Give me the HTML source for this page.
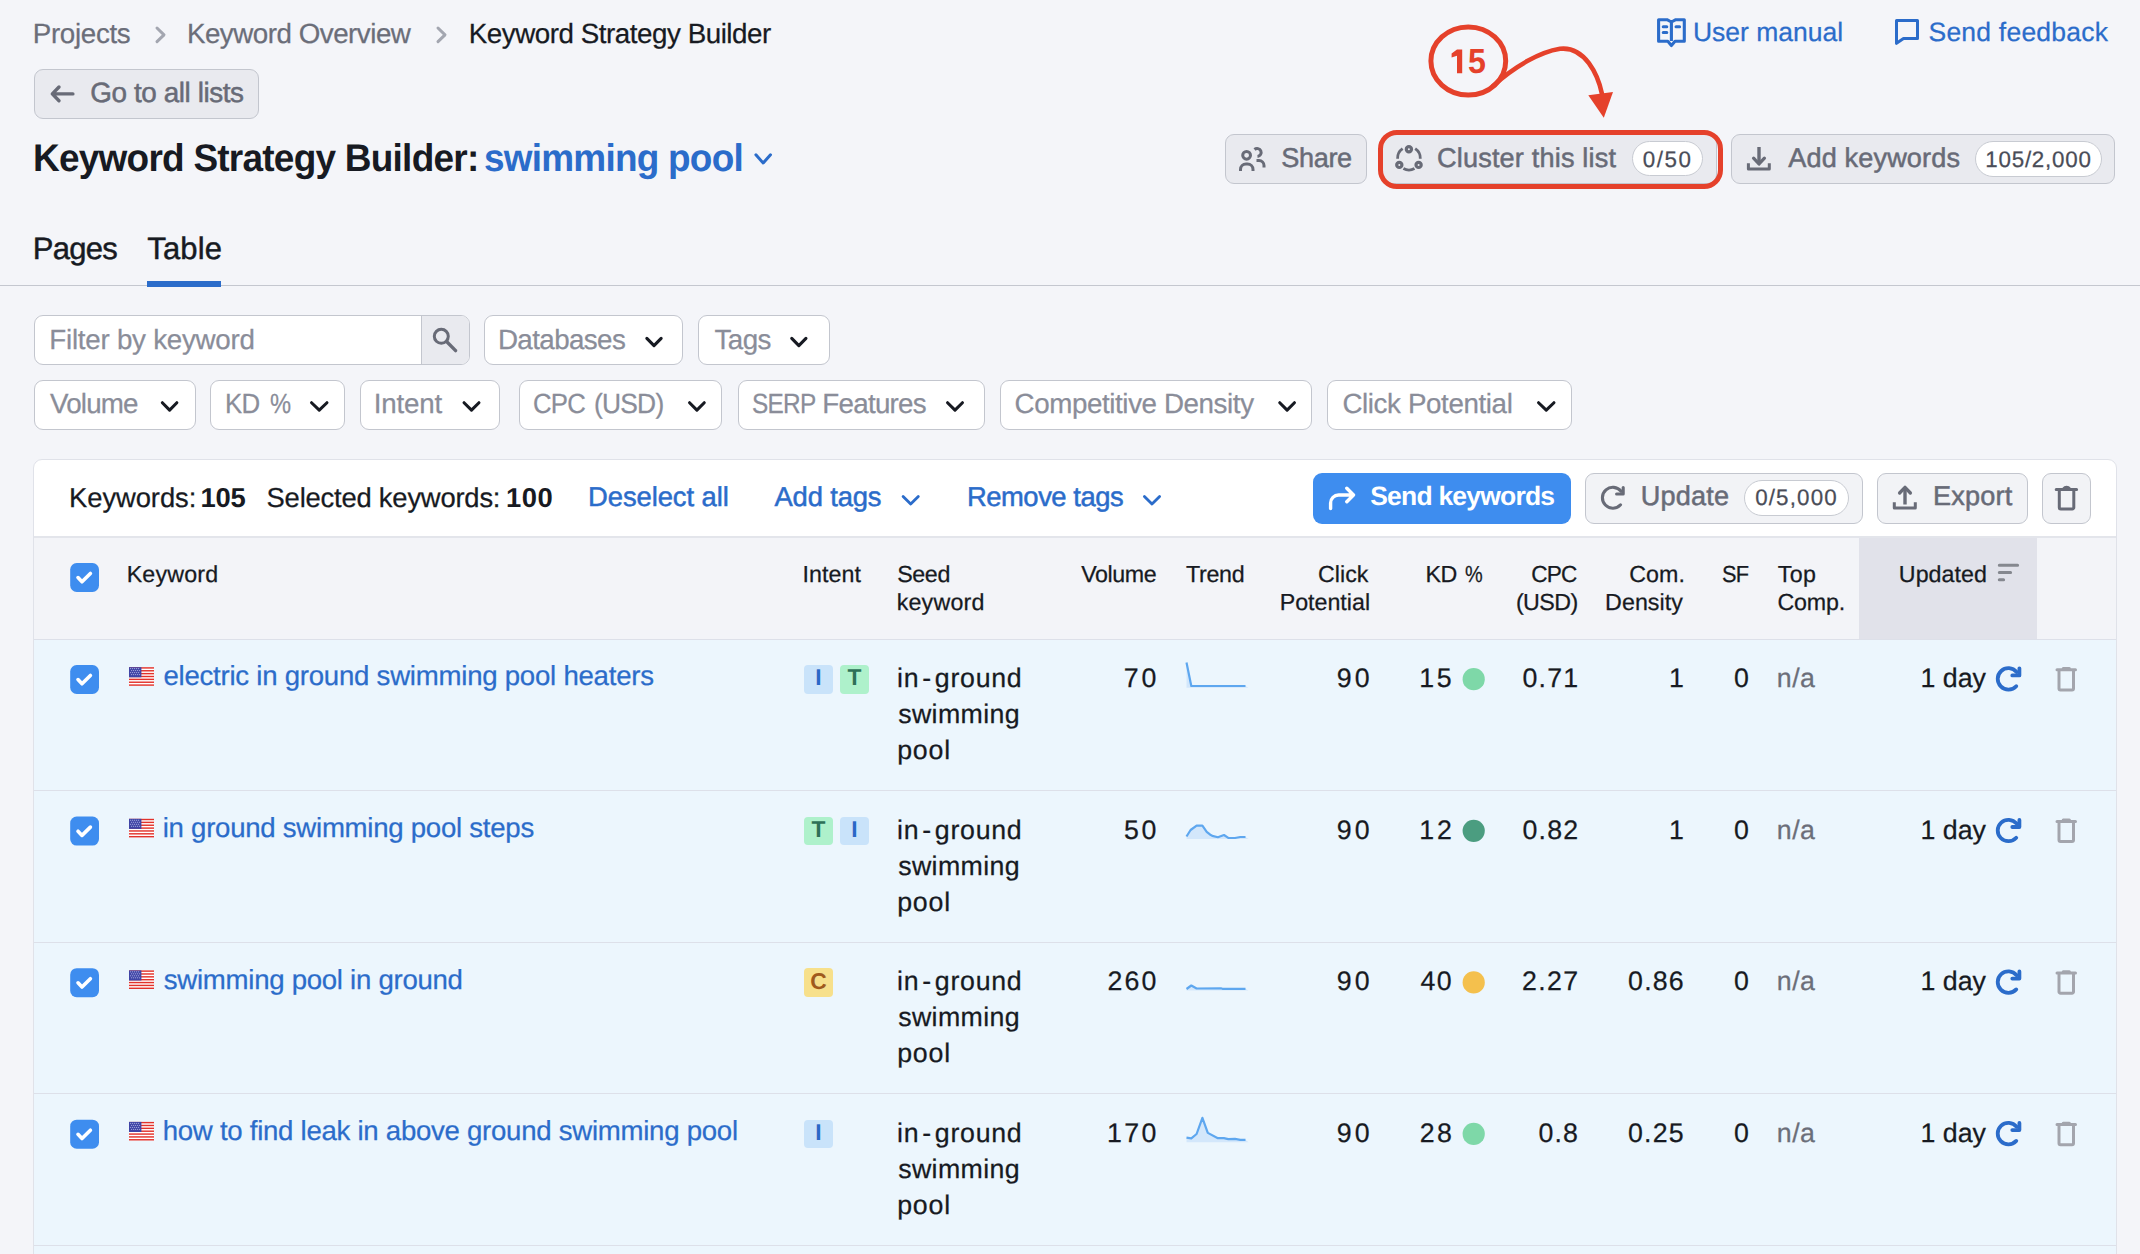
<!DOCTYPE html>
<html><head><meta charset="utf-8"><style>
html,body{margin:0;padding:0;}
body{width:2140px;height:1254px;overflow:hidden;background:#f4f5f9;position:relative;font-family:"Liberation Sans",sans-serif;}
.t{position:absolute;white-space:nowrap;line-height:1;text-rendering:geometricPrecision;}
.b{position:absolute;box-sizing:border-box;}
svg.b{overflow:visible;}
</style></head><body>
<span id="bc1" class="t" style="top:20.00px;font-size:27.75px;color:#6b6e79;font-weight:400;letter-spacing:-0.324px;-webkit-text-stroke:0.25px #6b6e79;left:32.72px;">Projects</span>
<svg class="b" style="left:150px;top:22px" width="24" height="26" viewBox="150 22 24 26"><path d="M157 28 L164 34.8 L157 41.6" fill="none" stroke="#a3a6b0" stroke-width="3" stroke-linecap="round" stroke-linejoin="round"/></svg>
<span id="bc2" class="t" style="top:20.00px;font-size:27.75px;color:#6b6e79;font-weight:400;letter-spacing:-0.488px;-webkit-text-stroke:0.25px #6b6e79;left:186.92px;">Keyword Overview</span>
<svg class="b" style="left:431px;top:22px" width="24" height="26" viewBox="431 22 24 26"><path d="M438 28 L445 34.8 L438 41.6" fill="none" stroke="#a3a6b0" stroke-width="3" stroke-linecap="round" stroke-linejoin="round"/></svg>
<span id="bc3" class="t" style="top:20.00px;font-size:27.75px;color:#171a22;font-weight:400;letter-spacing:-0.460px;-webkit-text-stroke:0.25px #171a22;left:468.72px;">Keyword Strategy Builder</span>
<div class="b" style="left:34px;top:69px;width:225px;height:50px;background:#e9eaef;border:1px solid #c3c6ce;border-radius:9px;"></div>
<svg class="b" style="left:44px;top:80px" width="36" height="28" viewBox="44 80 36 28"><path d="M72.9 93.9 H53 M59 87 L52.3 93.9 L59 100.8" fill="none" stroke="#686b77" stroke-width="3.4" stroke-linecap="round" stroke-linejoin="round"/></svg>
<span id="go" class="t" style="top:79.00px;font-size:27.88px;color:#686b77;font-weight:400;letter-spacing:-0.411px;-webkit-text-stroke:0.5px #686b77;left:90.20px;">Go to all lists</span>
<span id="title1" class="t" style="top:140.00px;font-size:38.50px;color:#171a22;font-weight:700;letter-spacing:-0.800px;transform:scaleX(0.9611);transform-origin:left center;left:32.82px;">Keyword Strategy Builder:</span>
<span id="title2" class="t" style="top:140.00px;font-size:38.50px;color:#2b6cca;font-weight:700;letter-spacing:-0.800px;transform:scaleX(0.9598);transform-origin:left center;left:483.90px;">swimming pool</span>
<svg class="b" style="left:751px;top:150px" width="25" height="19" viewBox="751 150 25 19"><path d="M755.90 154.80 L763.20 163.00 L770.50 154.80" fill="none" stroke="#2b6cca" stroke-width="3" stroke-linecap="round" stroke-linejoin="round"/></svg>
<span id="tab1" class="t" style="top:233.00px;font-size:31.00px;color:#171a22;font-weight:400;letter-spacing:-0.736px;-webkit-text-stroke:0.45px #171a22;left:32.76px;">Pages</span>
<span id="tab2" class="t" style="top:233.00px;font-size:31.00px;color:#171a22;font-weight:400;letter-spacing:0.141px;-webkit-text-stroke:0.45px #171a22;left:147.30px;">Table</span>
<div class="b" style="left:0px;top:285px;width:2140px;height:1px;background:#c4c7cf;"></div>
<div class="b" style="left:147px;top:281px;width:74px;height:6px;background:#2b6cca;"></div>
<svg class="b" style="left:1650px;top:12px" width="44" height="40" viewBox="1650 12 44 40"><path d="M1658.6 19.7 H1667 L1671.4 22 L1675.8 19.7 H1684.3 V41.3 H1675 L1671.4 45.5 L1667.8 41.3 H1658.6 Z M1671.4 22 V41" fill="none" stroke="#2b6cca" stroke-width="3.1" stroke-linejoin="round"/><path d="M1663.2 26.8 H1666.8 M1663.2 32.4 H1666.8 M1676 26.8 H1679.6" stroke="#2b6cca" stroke-width="3" stroke-linecap="round"/></svg>
<span id="um" class="t" style="top:19.00px;font-size:26.50px;color:#2b6cca;font-weight:400;letter-spacing:-0.002px;-webkit-text-stroke:0.25px #2b6cca;left:1692.96px;">User manual</span>
<svg class="b" style="left:1888px;top:12px" width="40" height="40" viewBox="1888 12 40 40"><path d="M1896.5 20.5 H1917.5 V38.6 H1903.5 L1896.5 43.3 Z" fill="none" stroke="#2b6cca" stroke-width="3" stroke-linejoin="round"/></svg>
<span id="sf" class="t" style="top:19.00px;font-size:26.50px;color:#2b6cca;font-weight:400;letter-spacing:0.221px;-webkit-text-stroke:0.25px #2b6cca;left:1928.50px;">Send feedback</span>
<div class="b" style="left:1225px;top:134px;width:142px;height:50px;background:#e9eaef;border:1px solid #c3c6ce;border-radius:9px;"></div>
<svg class="b" style="left:1230px;top:140px" width="50" height="40" viewBox="1230 140 50 40"><circle cx="1246.6" cy="155.3" r="3.9" fill="none" stroke="#686b77" stroke-width="3"/><path d="M1240.5 171 V169.5 A5.5 5.5 0 0 1 1246 164 H1247.5 A5.5 5.5 0 0 1 1253 169.5 V171" fill="none" stroke="#686b77" stroke-width="3" stroke-linecap="butt"/><path d="M1254.5 149.5 A4 4 0 1 1 1257.5 156.5" fill="none" stroke="#686b77" stroke-width="3"/><path d="M1256.5 160.5 H1259 A5 5 0 0 1 1264 165.5 V167.5" fill="none" stroke="#686b77" stroke-width="3"/></svg>
<span id="share" class="t" style="top:144.00px;font-size:27.12px;color:#686b77;font-weight:400;letter-spacing:-0.327px;-webkit-text-stroke:0.5px #686b77;left:1281.17px;">Share</span>
<div class="b" style="left:1382px;top:134px;width:335px;height:50px;background:#e9eaef;border:1px solid #c3c6ce;border-radius:9px;"></div>
<svg class="b" style="left:1388px;top:138px" width="42" height="40" viewBox="1388 138 42 40"><circle cx="1408.9" cy="149.2" r="2.6" fill="none" stroke="#686b77" stroke-width="3.2"/><circle cx="1399.3" cy="164.9" r="2.6" fill="none" stroke="#686b77" stroke-width="3.2"/><circle cx="1418.6" cy="164.9" r="2.6" fill="none" stroke="#686b77" stroke-width="3.2"/><path d="M1397.6 158.8 A11.5 11.5 0 0 1 1402.6 148.7 M1415.2 148.7 A11.5 11.5 0 0 1 1420.3 158.8 M1414.5 168.6 A11.5 11.5 0 0 1 1403.4 168.6" fill="none" stroke="#686b77" stroke-width="2.8"/></svg>
<span id="cluster" class="t" style="top:144.00px;font-size:27.12px;color:#686b77;font-weight:400;letter-spacing:0.169px;-webkit-text-stroke:0.5px #686b77;left:1437.02px;">Cluster this list</span>
<div class="b" style="left:1631.6px;top:141.4px;width:71.0px;height:35.0px;background:#fff;border:1px solid #c8cbd2;border-radius:18px;"></div>
<span id="b050" class="t" style="top:149.00px;font-size:22.38px;color:#4a4d58;font-weight:400;letter-spacing:1.562px;-webkit-text-stroke:0.25px #4a4d58;left:1642.63px;">0/50</span>
<div class="b" style="left:1731.4px;top:134px;width:384.0999999999999px;height:50px;background:#e9eaef;border:1px solid #c3c6ce;border-radius:9px;"></div>
<svg class="b" style="left:1740px;top:140px" width="40" height="40" viewBox="1740 140 40 40"><path d="M1759 147 V163" fill="none" stroke="#686b77" stroke-width="3.4"/><path d="M1753.6 158.2 L1759 164 L1764.4 158.2" fill="none" stroke="#686b77" stroke-width="3.3" stroke-linecap="round" stroke-linejoin="round"/><path d="M1748.4 163.3 V169 H1769.3 V163.3" fill="none" stroke="#686b77" stroke-width="3" stroke-linejoin="round"/></svg>
<span id="addkw" class="t" style="top:144.00px;font-size:27.12px;color:#686b77;font-weight:400;letter-spacing:0.132px;-webkit-text-stroke:0.5px #686b77;left:1788.25px;">Add keywords</span>
<div class="b" style="left:1974.6px;top:141.2px;width:127.70000000000027px;height:35.70000000000002px;background:#fff;border:1px solid #c8cbd2;border-radius:18px;"></div>
<span id="b105" class="t" style="top:149.00px;font-size:22.38px;color:#4a4d58;font-weight:400;letter-spacing:0.754px;-webkit-text-stroke:0.25px #4a4d58;left:1985.30px;">105/2,000</span>
<svg class="b" style="left:1410px;top:10px" width="230" height="120" viewBox="1410 10 230 120"><ellipse cx="1468.3" cy="61" rx="37.4" ry="34.1" fill="none" stroke="#e5412b" stroke-width="5"/><path d="M1493 86 C1515 66, 1540 52, 1560 48.8 C1585 46, 1598 75, 1602 94" fill="none" stroke="#e5412b" stroke-width="4.6" stroke-linecap="round"/><path d="M1588.3 95.2 L1613 91.9 L1603.8 117.7 Z" fill="#e5412b"/></svg>
<svg class="b" style="left:1448px;top:46px" width="18" height="30" viewBox="1448 46 18 30"><path d="M1451.6 53.6 L1457 49.5 H1462.2 V73.2 H1457 V55.8 L1451.6 57.6 Z" fill="#e5412b"/></svg>
<span id="n15" class="t" style="top:45.00px;font-size:34.75px;color:#e5412b;font-weight:700;transform:scaleX(0.9253);transform-origin:left center;left:1467.91px;">5</span>
<div class="b" style="left:1377.7px;top:130.2px;width:345px;height:59.1px;box-sizing:border-box;border:5px solid #e5412b;border-radius:19px;"></div>
<div class="b" style="left:34px;top:315px;width:435.5px;height:50px;background:#fff;border:1px solid #c3c6ce;border-radius:9px;box-sizing:border-box;"></div>
<div class="b" style="left:421px;top:316px;width:47.5px;height:48px;background:#e9eaef;border-left:1px solid #c3c6ce;border-radius:0 8px 8px 0;box-sizing:border-box;"></div>
<svg class="b" style="left:426px;top:320px" width="40" height="40" viewBox="426 320 40 40"><circle cx="441.3" cy="336.3" r="7" fill="none" stroke="#686b77" stroke-width="3"/><path d="M446.8 341.8 L455.6 350.6" stroke="#686b77" stroke-width="3.4" stroke-linecap="round"/></svg>
<span id="filt" class="t" style="top:326.00px;font-size:27.75px;color:#8a8d99;font-weight:400;letter-spacing:-0.254px;-webkit-text-stroke:0.25px #8a8d99;left:49.32px;">Filter by keyword</span>
<div class="b" style="left:484.4px;top:315px;width:199.10000000000002px;height:50px;background:#fff;border:1px solid #c3c6ce;border-radius:9px;box-sizing:border-box;"></div>
<span id="db" class="t" style="top:326.00px;font-size:27.75px;color:#8a8d99;font-weight:400;letter-spacing:-0.599px;-webkit-text-stroke:0.25px #8a8d99;left:497.92px;">Databases</span>
<svg class="b" style="left:642px;top:333px" width="25" height="18" viewBox="642 333 25 18"><path d="M646.85 338.35 L654.00 345.65 L661.15 338.35" fill="none" stroke="#171a22" stroke-width="3.1" stroke-linecap="round" stroke-linejoin="round"/></svg>
<div class="b" style="left:698.3px;top:315px;width:131.30000000000007px;height:50px;background:#fff;border:1px solid #c3c6ce;border-radius:9px;box-sizing:border-box;"></div>
<span id="tags" class="t" style="top:326.00px;font-size:27.75px;color:#8a8d99;font-weight:400;letter-spacing:-0.600px;-webkit-text-stroke:0.25px #8a8d99;left:714.58px;">Tags</span>
<svg class="b" style="left:787px;top:333px" width="25" height="18" viewBox="787 333 25 18"><path d="M791.75 338.35 L798.85 345.65 L805.95 338.35" fill="none" stroke="#171a22" stroke-width="3.1" stroke-linecap="round" stroke-linejoin="round"/></svg>
<div class="b" style="left:34.4px;top:380px;width:161.2px;height:50px;background:#fff;border:1px solid #c3c6ce;border-radius:9px;box-sizing:border-box;"></div>
<span id="vol" class="t" style="top:390.00px;font-size:27.75px;color:#8a8d99;font-weight:400;letter-spacing:-0.800px;-webkit-text-stroke:0.25px #8a8d99;left:49.98px;">Volume</span>
<svg class="b" style="left:157px;top:398px" width="25" height="18" viewBox="157 398 25 18"><path d="M162.35 402.75 L169.60 410.05 L176.85 402.75" fill="none" stroke="#171a22" stroke-width="3.1" stroke-linecap="round" stroke-linejoin="round"/></svg>
<div class="b" style="left:210.2px;top:380px;width:134.40000000000003px;height:50px;background:#fff;border:1px solid #c3c6ce;border-radius:9px;box-sizing:border-box;"></div>
<span id="kd0" class="t" style="top:390.00px;font-size:27.75px;color:#8a8d99;font-weight:400;letter-spacing:-0.800px;transform:scaleX(0.9310);transform-origin:left center;-webkit-text-stroke:0.25px #8a8d99;left:224.68px;">KD</span>
<span id="kd1" class="t" style="top:390.00px;font-size:27.75px;color:#8a8d99;font-weight:400;transform:scaleX(0.8543);transform-origin:left center;-webkit-text-stroke:0.25px #8a8d99;left:269.56px;">%</span>
<svg class="b" style="left:307px;top:398px" width="26" height="18" viewBox="307 398 26 18"><path d="M311.55 402.75 L319.25 410.05 L326.95 402.75" fill="none" stroke="#171a22" stroke-width="3.1" stroke-linecap="round" stroke-linejoin="round"/></svg>
<div class="b" style="left:360.3px;top:380px;width:139.89999999999998px;height:50px;background:#fff;border:1px solid #c3c6ce;border-radius:9px;box-sizing:border-box;"></div>
<span id="intent" class="t" style="top:390.00px;font-size:27.75px;color:#8a8d99;font-weight:400;letter-spacing:-0.175px;-webkit-text-stroke:0.25px #8a8d99;left:373.64px;">Intent</span>
<svg class="b" style="left:459px;top:398px" width="26" height="18" viewBox="459 398 26 18"><path d="M464.05 402.75 L471.50 410.05 L478.95 402.75" fill="none" stroke="#171a22" stroke-width="3.1" stroke-linecap="round" stroke-linejoin="round"/></svg>
<div class="b" style="left:518.5px;top:380px;width:203.60000000000002px;height:50px;background:#fff;border:1px solid #c3c6ce;border-radius:9px;box-sizing:border-box;"></div>
<span id="cpc0" class="t" style="top:390.00px;font-size:27.75px;color:#8a8d99;font-weight:400;letter-spacing:-0.800px;transform:scaleX(0.9280);transform-origin:left center;-webkit-text-stroke:0.25px #8a8d99;left:533.09px;">CPC</span>
<span id="cpc1" class="t" style="top:390.00px;font-size:27.75px;color:#8a8d99;font-weight:400;letter-spacing:-0.800px;transform:scaleX(0.9498);transform-origin:left center;-webkit-text-stroke:0.25px #8a8d99;left:594.17px;">(USD)</span>
<svg class="b" style="left:685px;top:398px" width="25" height="18" viewBox="685 398 25 18"><path d="M689.55 402.75 L696.90 410.05 L704.25 402.75" fill="none" stroke="#171a22" stroke-width="3.1" stroke-linecap="round" stroke-linejoin="round"/></svg>
<div class="b" style="left:738.2px;top:380px;width:246.89999999999998px;height:50px;background:#fff;border:1px solid #c3c6ce;border-radius:9px;box-sizing:border-box;"></div>
<span id="serp0" class="t" style="top:390.00px;font-size:27.75px;color:#8a8d99;font-weight:400;letter-spacing:-0.800px;transform:scaleX(0.8786);transform-origin:left center;-webkit-text-stroke:0.25px #8a8d99;left:752.49px;">SERP</span>
<span id="serp1" class="t" style="top:390.00px;font-size:27.75px;color:#8a8d99;font-weight:400;letter-spacing:-0.734px;-webkit-text-stroke:0.25px #8a8d99;left:822.32px;">Features</span>
<svg class="b" style="left:943px;top:398px" width="26" height="18" viewBox="943 398 26 18"><path d="M947.55 402.75 L955.00 410.05 L962.45 402.75" fill="none" stroke="#171a22" stroke-width="3.1" stroke-linecap="round" stroke-linejoin="round"/></svg>
<div class="b" style="left:1000.4px;top:380px;width:312.0000000000001px;height:50px;background:#fff;border:1px solid #c3c6ce;border-radius:9px;box-sizing:border-box;"></div>
<span id="cd" class="t" style="top:390.00px;font-size:27.75px;color:#8a8d99;font-weight:400;letter-spacing:-0.406px;-webkit-text-stroke:0.25px #8a8d99;left:1014.59px;">Competitive Density</span>
<svg class="b" style="left:1275px;top:398px" width="25" height="18" viewBox="1275 398 25 18"><path d="M1279.75 402.75 L1287.10 410.05 L1294.45 402.75" fill="none" stroke="#171a22" stroke-width="3.1" stroke-linecap="round" stroke-linejoin="round"/></svg>
<div class="b" style="left:1327.3px;top:380px;width:244.4000000000001px;height:50px;background:#fff;border:1px solid #c3c6ce;border-radius:9px;box-sizing:border-box;"></div>
<span id="cp" class="t" style="top:390.00px;font-size:27.75px;color:#8a8d99;font-weight:400;letter-spacing:-0.383px;-webkit-text-stroke:0.25px #8a8d99;left:1342.39px;">Click Potential</span>
<svg class="b" style="left:1534px;top:398px" width="26" height="18" viewBox="1534 398 26 18"><path d="M1538.55 402.75 L1546.25 410.05 L1553.95 402.75" fill="none" stroke="#171a22" stroke-width="3.1" stroke-linecap="round" stroke-linejoin="round"/></svg>
<div class="b" style="left:33px;top:458.5px;width:2084px;height:900px;background:#fff;border:1px solid #e0e2e9;border-radius:9px;box-sizing:border-box;"></div>
<span id="kw" class="t" style="top:484.00px;font-size:27.38px;color:#171a22;font-weight:400;letter-spacing:-0.071px;-webkit-text-stroke:0.25px #171a22;left:69.05px;">Keywords:</span>
<span id="kw105" class="t" style="top:484.00px;font-size:27.38px;color:#171a22;font-weight:700;letter-spacing:-0.200px;left:200.48px;">105</span>
<span id="sel" class="t" style="top:484.00px;font-size:27.38px;color:#171a22;font-weight:400;letter-spacing:-0.202px;-webkit-text-stroke:0.25px #171a22;left:266.56px;">Selected keywords:</span>
<span id="sel100" class="t" style="top:484.00px;font-size:27.38px;color:#171a22;font-weight:700;letter-spacing:0.480px;left:506.08px;">100</span>
<span id="desel" class="t" style="top:483.00px;font-size:27.38px;color:#2b6cca;font-weight:400;letter-spacing:-0.066px;-webkit-text-stroke:0.5px #2b6cca;left:588.05px;">Deselect all</span>
<span id="addt" class="t" style="top:483.00px;font-size:27.38px;color:#2b6cca;font-weight:400;letter-spacing:-0.146px;-webkit-text-stroke:0.5px #2b6cca;left:774.45px;">Add tags</span>
<svg class="b" style="left:898px;top:492px" width="26" height="18" viewBox="898 492 26 18"><path d="M903.10 496.40 L910.70 504.10 L918.30 496.40" fill="none" stroke="#2b6cca" stroke-width="2.8" stroke-linecap="round" stroke-linejoin="round"/></svg>
<span id="remt" class="t" style="top:483.00px;font-size:27.38px;color:#2b6cca;font-weight:400;letter-spacing:-0.456px;-webkit-text-stroke:0.5px #2b6cca;left:966.95px;">Remove tags</span>
<svg class="b" style="left:1140px;top:492px" width="26" height="18" viewBox="1140 492 26 18"><path d="M1144.40 496.40 L1152.00 504.10 L1159.60 496.40" fill="none" stroke="#2b6cca" stroke-width="2.8" stroke-linecap="round" stroke-linejoin="round"/></svg>
<div class="b" style="left:1313px;top:473px;width:258px;height:50.700000000000045px;background:#3e8def;border-radius:9px;"></div>
<svg class="b" style="left:1322px;top:478px" width="40" height="40" viewBox="1322 478 40 40"><path d="M1330.6 508.6 V503 A8 8 0 0 1 1338.6 495 H1352.5 M1346.8 488.2 L1353.5 495 L1346.8 501.8" fill="none" stroke="#fff" stroke-width="3.4" stroke-linecap="round" stroke-linejoin="round"/></svg>
<span id="send" class="t" style="top:483.00px;font-size:26.50px;color:#fff;font-weight:700;letter-spacing:-0.796px;left:1370.24px;">Send keywords</span>
<div class="b" style="left:1585.4px;top:473px;width:277.5999999999999px;height:50.700000000000045px;background:#f2f3f6;border:1px solid #c3c6ce;border-radius:9px;box-sizing:border-box;"></div>
<svg class="b" style="left:1594px;top:478px" width="40" height="40" viewBox="1594 478 40 40"><path d="M1621.1 491.3 A10.45 10.45 0 1 0 1620.57 504.8" fill="none" stroke="#686b77" stroke-width="3.1" stroke-linecap="round"/><path d="M1623.2 487.6 V494 H1616.6" fill="none" stroke="#686b77" stroke-width="3.1" stroke-linecap="round" stroke-linejoin="round"/></svg>
<span id="upd" class="t" style="top:482.00px;font-size:27.12px;color:#686b77;font-weight:400;letter-spacing:0.215px;-webkit-text-stroke:0.5px #686b77;left:1640.71px;">Update</span>
<div class="b" style="left:1743.6px;top:480.3px;width:105.20000000000005px;height:35.30000000000001px;background:#fff;border:1px solid #c8cbd2;border-radius:18px;box-sizing:border-box;"></div>
<span id="b5000" class="t" style="top:487.00px;font-size:22.38px;color:#4a4d58;font-weight:400;letter-spacing:1.149px;-webkit-text-stroke:0.25px #4a4d58;left:1755.13px;">0/5,000</span>
<div class="b" style="left:1877px;top:473px;width:150.70000000000005px;height:50.700000000000045px;background:#f2f3f6;border:1px solid #c3c6ce;border-radius:9px;box-sizing:border-box;"></div>
<svg class="b" style="left:1886px;top:478px" width="40" height="40" viewBox="1886 478 40 40"><path d="M1905 504.5 V488" fill="none" stroke="#686b77" stroke-width="3.4"/><path d="M1899.6 493 L1905 487.3 L1910.4 493" fill="none" stroke="#686b77" stroke-width="3.3" stroke-linecap="round" stroke-linejoin="round"/><path d="M1894.3 502.3 V508 H1915.3 V502.3" fill="none" stroke="#686b77" stroke-width="3" stroke-linejoin="round"/></svg>
<span id="exp" class="t" style="top:482.00px;font-size:27.12px;color:#686b77;font-weight:400;letter-spacing:0.213px;-webkit-text-stroke:0.5px #686b77;left:1932.98px;">Export</span>
<div class="b" style="left:2042.1px;top:473px;width:48.59999999999991px;height:50.700000000000045px;background:#f2f3f6;border:1px solid #c3c6ce;border-radius:9px;box-sizing:border-box;"></div>
<svg class="b" style="left:2046px;top:478px" width="40" height="40" viewBox="2046 478 40 40"><path d="M2056.2 489.6 H2076.6 M2063.8 488.5 A3.2 2.6 0 0 1 2069.4 488.5" fill="none" stroke="#686b77" stroke-width="3" stroke-linecap="round"/><path d="M2059.3 489.6 V507.5 A1.5 1.5 0 0 0 2060.8 509 H2072.3 A1.5 1.5 0 0 0 2073.8 507.5 V489.6" fill="none" stroke="#686b77" stroke-width="3"/></svg>
<div class="b" style="left:34px;top:536px;width:2082px;height:2px;background:#e3e5eb;"></div>
<div class="b" style="left:34px;top:538px;width:2082px;height:101px;background:#f3f4f8;"></div>
<div class="b" style="left:1859px;top:538px;width:178px;height:101px;background:#e1e2ea;"></div>
<svg class="b" style="left:68px;top:561px" width="34" height="34" viewBox="68 561 34 34"><rect x="70.2" y="563.00" width="28.8" height="29" rx="6.5" fill="#3e8def"/><path d="M78 577.60 L82 581.80 L90.4 573.50" fill="none" stroke="#fff" stroke-width="3.6" stroke-linecap="round" stroke-linejoin="round"/></svg>
<span id="h_kw" class="t" style="top:563.00px;font-size:23.25px;color:#171a22;font-weight:400;letter-spacing:0.156px;-webkit-text-stroke:0.25px #171a22;left:126.69px;">Keyword</span>
<span id="h_int" class="t" style="top:563.00px;font-size:23.25px;color:#171a22;font-weight:400;letter-spacing:0.049px;-webkit-text-stroke:0.25px #171a22;left:802.55px;">Intent</span>
<span id="h_seed1" class="t" style="top:563.00px;font-size:23.25px;color:#171a22;font-weight:400;letter-spacing:-0.353px;-webkit-text-stroke:0.25px #171a22;left:897.14px;">Seed</span>
<span id="h_seed2" class="t" style="top:591.00px;font-size:23.25px;color:#171a22;font-weight:400;letter-spacing:0.215px;-webkit-text-stroke:0.25px #171a22;left:896.63px;">keyword</span>
<span id="h_vol" class="t" style="top:563.00px;font-size:23.25px;color:#171a22;font-weight:400;letter-spacing:-0.405px;-webkit-text-stroke:0.25px #171a22;right:983.67px;">Volume</span>
<span id="h_trend" class="t" style="top:563.00px;font-size:23.25px;color:#171a22;font-weight:400;letter-spacing:-0.289px;-webkit-text-stroke:0.25px #171a22;left:1185.98px;">Trend</span>
<span id="h_cp1" class="t" style="top:563.00px;font-size:23.25px;color:#171a22;font-weight:400;letter-spacing:0.018px;-webkit-text-stroke:0.25px #171a22;right:771.52px;">Click</span>
<span id="h_cp2" class="t" style="top:591.00px;font-size:23.25px;color:#171a22;font-weight:400;letter-spacing:-0.015px;-webkit-text-stroke:0.25px #171a22;right:769.96px;">Potential</span>
<span id="h_kd" class="t" style="top:563.00px;font-size:23.25px;color:#171a22;font-weight:400;letter-spacing:-0.493px;-webkit-text-stroke:0.25px #171a22;left:1425.49px;">KD</span>
<span id="h_kd2" class="t" style="top:563.00px;font-size:23.25px;color:#171a22;font-weight:400;transform:scaleX(0.8565);transform-origin:left center;-webkit-text-stroke:0.25px #171a22;left:1465.29px;">%</span>
<span id="h_cpc1" class="t" style="top:563.00px;font-size:23.25px;color:#171a22;font-weight:400;letter-spacing:-0.800px;transform:scaleX(0.9752);transform-origin:right center;-webkit-text-stroke:0.25px #171a22;right:563.12px;">CPC</span>
<span id="h_cpc2" class="t" style="top:591.00px;font-size:23.25px;color:#171a22;font-weight:400;letter-spacing:-0.574px;-webkit-text-stroke:0.25px #171a22;right:562.33px;">(USD)</span>
<span id="h_cd1" class="t" style="top:563.00px;font-size:23.25px;color:#171a22;font-weight:400;letter-spacing:0.080px;-webkit-text-stroke:0.25px #171a22;right:455.00px;">Com.</span>
<span id="h_cd2" class="t" style="top:591.00px;font-size:23.25px;color:#171a22;font-weight:400;letter-spacing:0.037px;-webkit-text-stroke:0.25px #171a22;right:457.12px;">Density</span>
<span id="h_sf" class="t" style="top:563.00px;font-size:23.25px;color:#171a22;font-weight:400;letter-spacing:-0.800px;transform:scaleX(0.9357);transform-origin:left center;-webkit-text-stroke:0.25px #171a22;left:1721.61px;">SF</span>
<span id="h_top1" class="t" style="top:563.00px;font-size:23.25px;color:#171a22;font-weight:400;letter-spacing:0.399px;-webkit-text-stroke:0.25px #171a22;left:1777.78px;">Top</span>
<span id="h_top2" class="t" style="top:591.00px;font-size:23.25px;color:#171a22;font-weight:400;letter-spacing:-0.195px;-webkit-text-stroke:0.25px #171a22;left:1777.52px;">Comp.</span>
<span id="h_upd" class="t" style="top:563.00px;font-size:23.25px;color:#171a22;font-weight:400;letter-spacing:0.048px;-webkit-text-stroke:0.25px #171a22;left:1898.81px;">Updated</span>
<svg class="b" style="left:1994px;top:560px" width="30" height="26" viewBox="1994 560 30 26"><path d="M1999.3 565.3 H2017.6 M1999.3 572.5 H2010.6 M1999.3 579.7 H2003.6" stroke="#85888f" stroke-width="3" stroke-linecap="round"/></svg>
<div class="b" style="left:34px;top:640px;width:2082px;height:150px;background:#ecf6fd;"></div>
<div class="b" style="left:34px;top:639px;width:2082px;height:1px;background:#dde0e9;"></div>
<div class="b" style="left:34px;top:790px;width:2082px;height:1px;background:#dde0e9;"></div>
<svg class="b" style="left:68px;top:663px" width="34" height="34" viewBox="68 663 34 34"><rect x="70.2" y="665.00" width="28.8" height="29" rx="6.5" fill="#3e8def"/><path d="M78 679.60 L82 683.80 L90.4 675.50" fill="none" stroke="#fff" stroke-width="3.6" stroke-linecap="round" stroke-linejoin="round"/></svg>
<svg class="b" style="left:127px;top:665px" width="30" height="24" viewBox="127 665 30 24"><rect x="129" y="667.20" width="25" height="18.6" fill="#fff"/><rect x="129" y="667.20" width="25" height="1.43" fill="#e2322b"/><rect x="129" y="670.06" width="25" height="1.43" fill="#e2322b"/><rect x="129" y="672.92" width="25" height="1.43" fill="#e2322b"/><rect x="129" y="675.78" width="25" height="1.43" fill="#e2322b"/><rect x="129" y="678.65" width="25" height="1.43" fill="#e2322b"/><rect x="129" y="681.51" width="25" height="1.43" fill="#e2322b"/><rect x="129" y="684.37" width="25" height="1.43" fill="#e2322b"/><rect x="129" y="667.20" width="12.4" height="10.1" fill="#3f44a6"/><rect x="130.20" y="668.20" width="0.9" height="0.9" fill="#c9cbef"/><rect x="132.20" y="668.20" width="0.9" height="0.9" fill="#c9cbef"/><rect x="134.20" y="668.20" width="0.9" height="0.9" fill="#c9cbef"/><rect x="136.20" y="668.20" width="0.9" height="0.9" fill="#c9cbef"/><rect x="138.20" y="668.20" width="0.9" height="0.9" fill="#c9cbef"/><rect x="131.20" y="670.20" width="0.9" height="0.9" fill="#c9cbef"/><rect x="133.20" y="670.20" width="0.9" height="0.9" fill="#c9cbef"/><rect x="135.20" y="670.20" width="0.9" height="0.9" fill="#c9cbef"/><rect x="137.20" y="670.20" width="0.9" height="0.9" fill="#c9cbef"/><rect x="139.20" y="670.20" width="0.9" height="0.9" fill="#c9cbef"/><rect x="130.20" y="672.20" width="0.9" height="0.9" fill="#c9cbef"/><rect x="132.20" y="672.20" width="0.9" height="0.9" fill="#c9cbef"/><rect x="134.20" y="672.20" width="0.9" height="0.9" fill="#c9cbef"/><rect x="136.20" y="672.20" width="0.9" height="0.9" fill="#c9cbef"/><rect x="138.20" y="672.20" width="0.9" height="0.9" fill="#c9cbef"/><rect x="131.20" y="674.20" width="0.9" height="0.9" fill="#c9cbef"/><rect x="133.20" y="674.20" width="0.9" height="0.9" fill="#c9cbef"/><rect x="135.20" y="674.20" width="0.9" height="0.9" fill="#c9cbef"/><rect x="137.20" y="674.20" width="0.9" height="0.9" fill="#c9cbef"/><rect x="139.20" y="674.20" width="0.9" height="0.9" fill="#c9cbef"/></svg>
<span id="r0_kw" class="t" style="top:662.00px;font-size:27.62px;color:#2b6cca;font-weight:400;letter-spacing:-0.249px;-webkit-text-stroke:0.25px #2b6cca;left:163.43px;">electric in ground swimming pool heaters</span>
<div class="b" style="left:804px;top:665.20px;width:29px;height:28.6px;background:#c9e3fa;border-radius:4px;"></div>
<span class="t" style="left:804px;width:29px;text-align:center;top:666.48px;font-size:22.82px;font-weight:700;color:#2a67c6;">I</span>
<div class="b" style="left:840px;top:665.20px;width:29px;height:28.6px;background:#aef1cb;border-radius:4px;"></div>
<span class="t" style="left:840px;width:29px;text-align:center;top:666.48px;font-size:22.82px;font-weight:700;color:#2e7057;">T</span>
<span id="r0_s1" class="t" style="top:665.00px;font-size:26.75px;color:#171a22;font-weight:400;letter-spacing:0.711px;-webkit-text-stroke:0.25px #171a22;left:897.11px;">in&#8202;-&#8202;ground</span>
<span id="r0_s2" class="t" style="top:701.00px;font-size:26.75px;color:#171a22;font-weight:400;letter-spacing:0.366px;-webkit-text-stroke:0.25px #171a22;left:898.16px;">swimming</span>
<span id="r0_s3" class="t" style="top:737.00px;font-size:26.75px;color:#171a22;font-weight:400;letter-spacing:0.812px;-webkit-text-stroke:0.25px #171a22;left:897.18px;">pool</span>
<span id="r0_vol" class="t" style="top:665.00px;font-size:26.75px;color:#171a22;font-weight:400;letter-spacing:2.951px;-webkit-text-stroke:0.25px #171a22;right:980.70px;">70</span>
<svg class="b" style="left:1180px;top:654px" width="75" height="40" viewBox="1180 654 75 40"><path d="M1186.5 662.5 L1191.3 686.0 L1245.5 686.0 L1248.5 687.7 L1186.5 687.7 Z" fill="#d3e7fb"/><path d="M1186.5 662.5 L1191.3 686.0 L1245.5 686.0" fill="none" stroke="#5ea7ef" stroke-width="2.2" stroke-linejoin="round"/></svg>
<span id="r0_cp" class="t" style="top:665.00px;font-size:26.75px;color:#171a22;font-weight:400;letter-spacing:3.033px;-webkit-text-stroke:0.25px #171a22;right:767.42px;">90</span>
<span id="r0_kd" class="t" style="top:665.00px;font-size:26.75px;color:#171a22;font-weight:400;letter-spacing:2.795px;-webkit-text-stroke:0.25px #171a22;right:685.48px;">15</span>
<svg class="b" style="left:1460px;top:667px" width="28" height="26" viewBox="1460 667 28 26"><circle cx="1473.7" cy="679.20" r="11.1" fill="#7ed8a8"/></svg>
<span id="r0_cpc" class="t" style="top:665.00px;font-size:26.75px;color:#171a22;font-weight:400;letter-spacing:1.224px;-webkit-text-stroke:0.25px #171a22;right:560.67px;">0.71</span>
<span id="r0_cd" class="t" style="top:665.00px;font-size:26.75px;color:#171a22;font-weight:400;-webkit-text-stroke:0.25px #171a22;right:456.19px;">1</span>
<span id="r0_sf" class="t" style="top:665.00px;font-size:26.75px;color:#171a22;font-weight:400;-webkit-text-stroke:0.25px #171a22;right:391.16px;">0</span>
<span id="r0_na" class="t" style="top:665.00px;font-size:26.75px;color:#6b6e79;font-weight:400;letter-spacing:0.494px;-webkit-text-stroke:0.25px #6b6e79;left:1776.82px;">n/a</span>
<span id="r0_day" class="t" style="top:665.00px;font-size:26.75px;color:#171a22;font-weight:400;letter-spacing:-0.041px;-webkit-text-stroke:0.25px #171a22;right:154.19px;">1 day</span>
<svg class="b" style="left:1990px;top:659px" width="40" height="40" viewBox="1990 659 40 40"><path d="M2016.6 672.00 A10.7 10.7 0 1 0 2016.25 686.20" fill="none" stroke="#2b6cca" stroke-width="3.8" stroke-linecap="round"/><path d="M2019.4 668.30 V675.40 H2012.3" fill="none" stroke="#2b6cca" stroke-width="3.8" stroke-linecap="round" stroke-linejoin="round"/></svg>
<svg class="b" style="left:2050px;top:661px" width="32" height="36" viewBox="2050 661 32 36"><path d="M2057 669.80 H2075.5 M2063.2 668.50 H2069.4" fill="none" stroke="#a3a5ad" stroke-width="3" stroke-linecap="round"/><path d="M2059 669.80 V688.50 A1.5 1.5 0 0 0 2060.5 690.00 H2072 A1.5 1.5 0 0 0 2073.5 688.50 V669.80" fill="none" stroke="#a3a5ad" stroke-width="3"/></svg>
<div class="b" style="left:34px;top:791px;width:2082px;height:151px;background:#ecf6fd;"></div>
<div class="b" style="left:34px;top:942px;width:2082px;height:1px;background:#dde0e9;"></div>
<svg class="b" style="left:68px;top:814px" width="34" height="34" viewBox="68 814 34 34"><rect x="70.2" y="816.60" width="28.8" height="29" rx="6.5" fill="#3e8def"/><path d="M78 831.20 L82 835.40 L90.4 827.10" fill="none" stroke="#fff" stroke-width="3.6" stroke-linecap="round" stroke-linejoin="round"/></svg>
<svg class="b" style="left:127px;top:816px" width="30" height="24" viewBox="127 816 30 24"><rect x="129" y="818.80" width="25" height="18.6" fill="#fff"/><rect x="129" y="818.80" width="25" height="1.43" fill="#e2322b"/><rect x="129" y="821.66" width="25" height="1.43" fill="#e2322b"/><rect x="129" y="824.52" width="25" height="1.43" fill="#e2322b"/><rect x="129" y="827.38" width="25" height="1.43" fill="#e2322b"/><rect x="129" y="830.25" width="25" height="1.43" fill="#e2322b"/><rect x="129" y="833.11" width="25" height="1.43" fill="#e2322b"/><rect x="129" y="835.97" width="25" height="1.43" fill="#e2322b"/><rect x="129" y="818.80" width="12.4" height="10.1" fill="#3f44a6"/><rect x="130.20" y="819.80" width="0.9" height="0.9" fill="#c9cbef"/><rect x="132.20" y="819.80" width="0.9" height="0.9" fill="#c9cbef"/><rect x="134.20" y="819.80" width="0.9" height="0.9" fill="#c9cbef"/><rect x="136.20" y="819.80" width="0.9" height="0.9" fill="#c9cbef"/><rect x="138.20" y="819.80" width="0.9" height="0.9" fill="#c9cbef"/><rect x="131.20" y="821.80" width="0.9" height="0.9" fill="#c9cbef"/><rect x="133.20" y="821.80" width="0.9" height="0.9" fill="#c9cbef"/><rect x="135.20" y="821.80" width="0.9" height="0.9" fill="#c9cbef"/><rect x="137.20" y="821.80" width="0.9" height="0.9" fill="#c9cbef"/><rect x="139.20" y="821.80" width="0.9" height="0.9" fill="#c9cbef"/><rect x="130.20" y="823.80" width="0.9" height="0.9" fill="#c9cbef"/><rect x="132.20" y="823.80" width="0.9" height="0.9" fill="#c9cbef"/><rect x="134.20" y="823.80" width="0.9" height="0.9" fill="#c9cbef"/><rect x="136.20" y="823.80" width="0.9" height="0.9" fill="#c9cbef"/><rect x="138.20" y="823.80" width="0.9" height="0.9" fill="#c9cbef"/><rect x="131.20" y="825.80" width="0.9" height="0.9" fill="#c9cbef"/><rect x="133.20" y="825.80" width="0.9" height="0.9" fill="#c9cbef"/><rect x="135.20" y="825.80" width="0.9" height="0.9" fill="#c9cbef"/><rect x="137.20" y="825.80" width="0.9" height="0.9" fill="#c9cbef"/><rect x="139.20" y="825.80" width="0.9" height="0.9" fill="#c9cbef"/></svg>
<span id="r1_kw" class="t" style="top:814.00px;font-size:27.62px;color:#2b6cca;font-weight:400;letter-spacing:-0.272px;-webkit-text-stroke:0.25px #2b6cca;left:162.75px;">in ground swimming pool steps</span>
<div class="b" style="left:804px;top:816.80px;width:29px;height:28.6px;background:#aef1cb;border-radius:4px;"></div>
<span class="t" style="left:804px;width:29px;text-align:center;top:818.08px;font-size:22.82px;font-weight:700;color:#2e7057;">T</span>
<div class="b" style="left:840px;top:816.80px;width:29px;height:28.6px;background:#c9e3fa;border-radius:4px;"></div>
<span class="t" style="left:840px;width:29px;text-align:center;top:818.08px;font-size:22.82px;font-weight:700;color:#2a67c6;">I</span>
<span id="r1_s1" class="t" style="top:817.00px;font-size:26.75px;color:#171a22;font-weight:400;letter-spacing:0.711px;-webkit-text-stroke:0.25px #171a22;left:897.11px;">in&#8202;-&#8202;ground</span>
<span id="r1_s2" class="t" style="top:853.00px;font-size:26.75px;color:#171a22;font-weight:400;letter-spacing:0.366px;-webkit-text-stroke:0.25px #171a22;left:898.16px;">swimming</span>
<span id="r1_s3" class="t" style="top:889.00px;font-size:26.75px;color:#171a22;font-weight:400;letter-spacing:0.812px;-webkit-text-stroke:0.25px #171a22;left:897.18px;">pool</span>
<span id="r1_vol" class="t" style="top:817.00px;font-size:26.75px;color:#171a22;font-weight:400;letter-spacing:2.650px;-webkit-text-stroke:0.25px #171a22;right:981.00px;">50</span>
<svg class="b" style="left:1180px;top:805px" width="75" height="40" viewBox="1180 805 75 40"><path d="M1186.5 836.5 L1190.6 830.0 L1196.6 825.6 L1202.4 825.6 L1206.7 831.8 L1209.6 834.2 L1212.3 835.9 L1217.9 837.2 L1224.0 835.0 L1228.3 837.8 L1235.0 838.0 L1240.3 837.0 L1245.5 837.0 L1248.5 839.0 L1186.5 839.0 Z" fill="#d3e7fb"/><path d="M1186.5 836.5 L1190.6 830.0 L1196.6 825.6 L1202.4 825.6 L1206.7 831.8 L1209.6 834.2 L1212.3 835.9 L1217.9 837.2 L1224.0 835.0 L1228.3 837.8 L1235.0 838.0 L1240.3 837.0 L1245.5 837.0" fill="none" stroke="#5ea7ef" stroke-width="2.2" stroke-linejoin="round"/></svg>
<span id="r1_cp" class="t" style="top:817.00px;font-size:26.75px;color:#171a22;font-weight:400;letter-spacing:3.033px;-webkit-text-stroke:0.25px #171a22;right:767.42px;">90</span>
<span id="r1_kd" class="t" style="top:817.00px;font-size:26.75px;color:#171a22;font-weight:400;letter-spacing:3.017px;-webkit-text-stroke:0.25px #171a22;right:685.04px;">12</span>
<svg class="b" style="left:1460px;top:818px" width="28" height="26" viewBox="1460 818 28 26"><circle cx="1473.7" cy="830.80" r="11.1" fill="#4b9d80"/></svg>
<span id="r1_cpc" class="t" style="top:817.00px;font-size:26.75px;color:#171a22;font-weight:400;letter-spacing:1.237px;-webkit-text-stroke:0.25px #171a22;right:560.62px;">0.82</span>
<span id="r1_cd" class="t" style="top:817.00px;font-size:26.75px;color:#171a22;font-weight:400;-webkit-text-stroke:0.25px #171a22;right:456.19px;">1</span>
<span id="r1_sf" class="t" style="top:817.00px;font-size:26.75px;color:#171a22;font-weight:400;-webkit-text-stroke:0.25px #171a22;right:391.16px;">0</span>
<span id="r1_na" class="t" style="top:817.00px;font-size:26.75px;color:#6b6e79;font-weight:400;letter-spacing:0.494px;-webkit-text-stroke:0.25px #6b6e79;left:1776.82px;">n/a</span>
<span id="r1_day" class="t" style="top:817.00px;font-size:26.75px;color:#171a22;font-weight:400;letter-spacing:-0.041px;-webkit-text-stroke:0.25px #171a22;right:154.19px;">1 day</span>
<svg class="b" style="left:1990px;top:810px" width="40" height="40" viewBox="1990 810 40 40"><path d="M2016.6 823.60 A10.7 10.7 0 1 0 2016.25 837.80" fill="none" stroke="#2b6cca" stroke-width="3.8" stroke-linecap="round"/><path d="M2019.4 819.90 V827.00 H2012.3" fill="none" stroke="#2b6cca" stroke-width="3.8" stroke-linecap="round" stroke-linejoin="round"/></svg>
<svg class="b" style="left:2050px;top:812px" width="32" height="36" viewBox="2050 812 32 36"><path d="M2057 821.40 H2075.5 M2063.2 820.10 H2069.4" fill="none" stroke="#a3a5ad" stroke-width="3" stroke-linecap="round"/><path d="M2059 821.40 V840.10 A1.5 1.5 0 0 0 2060.5 841.60 H2072 A1.5 1.5 0 0 0 2073.5 840.10 V821.40" fill="none" stroke="#a3a5ad" stroke-width="3"/></svg>
<div class="b" style="left:34px;top:943px;width:2082px;height:150px;background:#ecf6fd;"></div>
<div class="b" style="left:34px;top:1093px;width:2082px;height:1px;background:#dde0e9;"></div>
<svg class="b" style="left:68px;top:966px" width="34" height="34" viewBox="68 966 34 34"><rect x="70.2" y="968.20" width="28.8" height="29" rx="6.5" fill="#3e8def"/><path d="M78 982.80 L82 987.00 L90.4 978.70" fill="none" stroke="#fff" stroke-width="3.6" stroke-linecap="round" stroke-linejoin="round"/></svg>
<svg class="b" style="left:127px;top:968px" width="30" height="24" viewBox="127 968 30 24"><rect x="129" y="970.40" width="25" height="18.6" fill="#fff"/><rect x="129" y="970.40" width="25" height="1.43" fill="#e2322b"/><rect x="129" y="973.26" width="25" height="1.43" fill="#e2322b"/><rect x="129" y="976.12" width="25" height="1.43" fill="#e2322b"/><rect x="129" y="978.98" width="25" height="1.43" fill="#e2322b"/><rect x="129" y="981.85" width="25" height="1.43" fill="#e2322b"/><rect x="129" y="984.71" width="25" height="1.43" fill="#e2322b"/><rect x="129" y="987.57" width="25" height="1.43" fill="#e2322b"/><rect x="129" y="970.40" width="12.4" height="10.1" fill="#3f44a6"/><rect x="130.20" y="971.40" width="0.9" height="0.9" fill="#c9cbef"/><rect x="132.20" y="971.40" width="0.9" height="0.9" fill="#c9cbef"/><rect x="134.20" y="971.40" width="0.9" height="0.9" fill="#c9cbef"/><rect x="136.20" y="971.40" width="0.9" height="0.9" fill="#c9cbef"/><rect x="138.20" y="971.40" width="0.9" height="0.9" fill="#c9cbef"/><rect x="131.20" y="973.40" width="0.9" height="0.9" fill="#c9cbef"/><rect x="133.20" y="973.40" width="0.9" height="0.9" fill="#c9cbef"/><rect x="135.20" y="973.40" width="0.9" height="0.9" fill="#c9cbef"/><rect x="137.20" y="973.40" width="0.9" height="0.9" fill="#c9cbef"/><rect x="139.20" y="973.40" width="0.9" height="0.9" fill="#c9cbef"/><rect x="130.20" y="975.40" width="0.9" height="0.9" fill="#c9cbef"/><rect x="132.20" y="975.40" width="0.9" height="0.9" fill="#c9cbef"/><rect x="134.20" y="975.40" width="0.9" height="0.9" fill="#c9cbef"/><rect x="136.20" y="975.40" width="0.9" height="0.9" fill="#c9cbef"/><rect x="138.20" y="975.40" width="0.9" height="0.9" fill="#c9cbef"/><rect x="131.20" y="977.40" width="0.9" height="0.9" fill="#c9cbef"/><rect x="133.20" y="977.40" width="0.9" height="0.9" fill="#c9cbef"/><rect x="135.20" y="977.40" width="0.9" height="0.9" fill="#c9cbef"/><rect x="137.20" y="977.40" width="0.9" height="0.9" fill="#c9cbef"/><rect x="139.20" y="977.40" width="0.9" height="0.9" fill="#c9cbef"/></svg>
<span id="r2_kw" class="t" style="top:966.00px;font-size:27.62px;color:#2b6cca;font-weight:400;letter-spacing:-0.284px;-webkit-text-stroke:0.25px #2b6cca;left:163.83px;">swimming pool in ground</span>
<div class="b" style="left:804px;top:968.40px;width:29px;height:28.6px;background:#f7e08b;border-radius:4px;"></div>
<span class="t" style="left:804px;width:29px;text-align:center;top:969.68px;font-size:22.82px;font-weight:700;color:#a05a1c;">C</span>
<span id="r2_s1" class="t" style="top:968.00px;font-size:26.75px;color:#171a22;font-weight:400;letter-spacing:0.711px;-webkit-text-stroke:0.25px #171a22;left:897.11px;">in&#8202;-&#8202;ground</span>
<span id="r2_s2" class="t" style="top:1004.00px;font-size:26.75px;color:#171a22;font-weight:400;letter-spacing:0.366px;-webkit-text-stroke:0.25px #171a22;left:898.16px;">swimming</span>
<span id="r2_s3" class="t" style="top:1040.00px;font-size:26.75px;color:#171a22;font-weight:400;letter-spacing:0.812px;-webkit-text-stroke:0.25px #171a22;left:897.18px;">pool</span>
<span id="r2_vol" class="t" style="top:968.00px;font-size:26.75px;color:#171a22;font-weight:400;letter-spacing:2.075px;-webkit-text-stroke:0.25px #171a22;right:981.58px;">260</span>
<svg class="b" style="left:1180px;top:957px" width="75" height="40" viewBox="1180 957 75 40"><path d="M1186.5 989.0 L1191.3 985.5 L1196.6 988.5 L1220.9 988.3 L1222.4 988.8 L1245.5 988.8 L1248.5 990.5 L1186.5 990.5 Z" fill="#d3e7fb"/><path d="M1186.5 989.0 L1191.3 985.5 L1196.6 988.5 L1220.9 988.3 L1222.4 988.8 L1245.5 988.8" fill="none" stroke="#5ea7ef" stroke-width="2.2" stroke-linejoin="round"/></svg>
<span id="r2_cp" class="t" style="top:968.00px;font-size:26.75px;color:#171a22;font-weight:400;letter-spacing:3.033px;-webkit-text-stroke:0.25px #171a22;right:767.42px;">90</span>
<span id="r2_kd" class="t" style="top:968.00px;font-size:26.75px;color:#171a22;font-weight:400;letter-spacing:1.293px;-webkit-text-stroke:0.25px #171a22;right:687.06px;">40</span>
<svg class="b" style="left:1460px;top:970px" width="28" height="26" viewBox="1460 970 28 26"><circle cx="1473.7" cy="982.40" r="11.1" fill="#f4c04d"/></svg>
<span id="r2_cpc" class="t" style="top:968.00px;font-size:26.75px;color:#171a22;font-weight:400;letter-spacing:1.338px;-webkit-text-stroke:0.25px #171a22;right:560.52px;">2.27</span>
<span id="r2_cd" class="t" style="top:968.00px;font-size:26.75px;color:#171a22;font-weight:400;letter-spacing:1.181px;-webkit-text-stroke:0.25px #171a22;right:455.14px;">0.86</span>
<span id="r2_sf" class="t" style="top:968.00px;font-size:26.75px;color:#171a22;font-weight:400;-webkit-text-stroke:0.25px #171a22;right:391.16px;">0</span>
<span id="r2_na" class="t" style="top:968.00px;font-size:26.75px;color:#6b6e79;font-weight:400;letter-spacing:0.494px;-webkit-text-stroke:0.25px #6b6e79;left:1776.82px;">n/a</span>
<span id="r2_day" class="t" style="top:968.00px;font-size:26.75px;color:#171a22;font-weight:400;letter-spacing:-0.041px;-webkit-text-stroke:0.25px #171a22;right:154.19px;">1 day</span>
<svg class="b" style="left:1990px;top:962px" width="40" height="40" viewBox="1990 962 40 40"><path d="M2016.6 975.20 A10.7 10.7 0 1 0 2016.25 989.40" fill="none" stroke="#2b6cca" stroke-width="3.8" stroke-linecap="round"/><path d="M2019.4 971.50 V978.60 H2012.3" fill="none" stroke="#2b6cca" stroke-width="3.8" stroke-linecap="round" stroke-linejoin="round"/></svg>
<svg class="b" style="left:2050px;top:964px" width="32" height="36" viewBox="2050 964 32 36"><path d="M2057 973.00 H2075.5 M2063.2 971.70 H2069.4" fill="none" stroke="#a3a5ad" stroke-width="3" stroke-linecap="round"/><path d="M2059 973.00 V991.70 A1.5 1.5 0 0 0 2060.5 993.20 H2072 A1.5 1.5 0 0 0 2073.5 991.70 V973.00" fill="none" stroke="#a3a5ad" stroke-width="3"/></svg>
<div class="b" style="left:34px;top:1094px;width:2082px;height:151px;background:#ecf6fd;"></div>
<div class="b" style="left:34px;top:1245px;width:2082px;height:1px;background:#dde0e9;"></div>
<div class="b" style="left:34px;top:1246px;width:2082px;height:8px;background:#ecf6fd;"></div>
<svg class="b" style="left:68px;top:1117px" width="34" height="34" viewBox="68 1117 34 34"><rect x="70.2" y="1119.70" width="28.8" height="29" rx="6.5" fill="#3e8def"/><path d="M78 1134.30 L82 1138.50 L90.4 1130.20" fill="none" stroke="#fff" stroke-width="3.6" stroke-linecap="round" stroke-linejoin="round"/></svg>
<svg class="b" style="left:127px;top:1119px" width="30" height="24" viewBox="127 1119 30 24"><rect x="129" y="1121.90" width="25" height="18.6" fill="#fff"/><rect x="129" y="1121.90" width="25" height="1.43" fill="#e2322b"/><rect x="129" y="1124.76" width="25" height="1.43" fill="#e2322b"/><rect x="129" y="1127.62" width="25" height="1.43" fill="#e2322b"/><rect x="129" y="1130.48" width="25" height="1.43" fill="#e2322b"/><rect x="129" y="1133.35" width="25" height="1.43" fill="#e2322b"/><rect x="129" y="1136.21" width="25" height="1.43" fill="#e2322b"/><rect x="129" y="1139.07" width="25" height="1.43" fill="#e2322b"/><rect x="129" y="1121.90" width="12.4" height="10.1" fill="#3f44a6"/><rect x="130.20" y="1122.90" width="0.9" height="0.9" fill="#c9cbef"/><rect x="132.20" y="1122.90" width="0.9" height="0.9" fill="#c9cbef"/><rect x="134.20" y="1122.90" width="0.9" height="0.9" fill="#c9cbef"/><rect x="136.20" y="1122.90" width="0.9" height="0.9" fill="#c9cbef"/><rect x="138.20" y="1122.90" width="0.9" height="0.9" fill="#c9cbef"/><rect x="131.20" y="1124.90" width="0.9" height="0.9" fill="#c9cbef"/><rect x="133.20" y="1124.90" width="0.9" height="0.9" fill="#c9cbef"/><rect x="135.20" y="1124.90" width="0.9" height="0.9" fill="#c9cbef"/><rect x="137.20" y="1124.90" width="0.9" height="0.9" fill="#c9cbef"/><rect x="139.20" y="1124.90" width="0.9" height="0.9" fill="#c9cbef"/><rect x="130.20" y="1126.90" width="0.9" height="0.9" fill="#c9cbef"/><rect x="132.20" y="1126.90" width="0.9" height="0.9" fill="#c9cbef"/><rect x="134.20" y="1126.90" width="0.9" height="0.9" fill="#c9cbef"/><rect x="136.20" y="1126.90" width="0.9" height="0.9" fill="#c9cbef"/><rect x="138.20" y="1126.90" width="0.9" height="0.9" fill="#c9cbef"/><rect x="131.20" y="1128.90" width="0.9" height="0.9" fill="#c9cbef"/><rect x="133.20" y="1128.90" width="0.9" height="0.9" fill="#c9cbef"/><rect x="135.20" y="1128.90" width="0.9" height="0.9" fill="#c9cbef"/><rect x="137.20" y="1128.90" width="0.9" height="0.9" fill="#c9cbef"/><rect x="139.20" y="1128.90" width="0.9" height="0.9" fill="#c9cbef"/></svg>
<span id="r3_kw" class="t" style="top:1117.00px;font-size:27.62px;color:#2b6cca;font-weight:400;letter-spacing:-0.277px;-webkit-text-stroke:0.25px #2b6cca;left:162.68px;">how to find leak in above ground swimming pool</span>
<div class="b" style="left:804px;top:1119.90px;width:29px;height:28.6px;background:#c9e3fa;border-radius:4px;"></div>
<span class="t" style="left:804px;width:29px;text-align:center;top:1121.18px;font-size:22.82px;font-weight:700;color:#2a67c6;">I</span>
<span id="r3_s1" class="t" style="top:1120.00px;font-size:26.75px;color:#171a22;font-weight:400;letter-spacing:0.711px;-webkit-text-stroke:0.25px #171a22;left:897.11px;">in&#8202;-&#8202;ground</span>
<span id="r3_s2" class="t" style="top:1156.00px;font-size:26.75px;color:#171a22;font-weight:400;letter-spacing:0.366px;-webkit-text-stroke:0.25px #171a22;left:898.16px;">swimming</span>
<span id="r3_s3" class="t" style="top:1192.00px;font-size:26.75px;color:#171a22;font-weight:400;letter-spacing:0.812px;-webkit-text-stroke:0.25px #171a22;left:897.18px;">pool</span>
<span id="r3_vol" class="t" style="top:1120.00px;font-size:26.75px;color:#171a22;font-weight:400;letter-spacing:2.421px;-webkit-text-stroke:0.25px #171a22;right:981.23px;">170</span>
<svg class="b" style="left:1180px;top:1108px" width="75" height="40" viewBox="1180 1108 75 40"><path d="M1186.5 1137.6 L1191.3 1138.3 L1196.6 1134.0 L1202.4 1117.8 L1207.8 1132.9 L1217.9 1138.2 L1223.9 1138.2 L1228.3 1139.1 L1235.0 1138.9 L1240.3 1139.8 L1245.5 1139.8 L1248.5 1142.3 L1186.5 1142.3 Z" fill="#d3e7fb"/><path d="M1186.5 1137.6 L1191.3 1138.3 L1196.6 1134.0 L1202.4 1117.8 L1207.8 1132.9 L1217.9 1138.2 L1223.9 1138.2 L1228.3 1139.1 L1235.0 1138.9 L1240.3 1139.8 L1245.5 1139.8" fill="none" stroke="#5ea7ef" stroke-width="2.2" stroke-linejoin="round"/></svg>
<span id="r3_cp" class="t" style="top:1120.00px;font-size:26.75px;color:#171a22;font-weight:400;letter-spacing:3.033px;-webkit-text-stroke:0.25px #171a22;right:767.42px;">90</span>
<span id="r3_kd" class="t" style="top:1120.00px;font-size:26.75px;color:#171a22;font-weight:400;letter-spacing:2.142px;-webkit-text-stroke:0.25px #171a22;right:686.10px;">28</span>
<svg class="b" style="left:1460px;top:1121px" width="28" height="26" viewBox="1460 1121 28 26"><circle cx="1473.7" cy="1133.90" r="11.1" fill="#7ed8a8"/></svg>
<span id="r3_cpc" class="t" style="top:1120.00px;font-size:26.75px;color:#171a22;font-weight:400;letter-spacing:1.160px;-webkit-text-stroke:0.25px #171a22;right:560.88px;">0.8</span>
<span id="r3_cd" class="t" style="top:1120.00px;font-size:26.75px;color:#171a22;font-weight:400;letter-spacing:1.163px;-webkit-text-stroke:0.25px #171a22;right:455.21px;">0.25</span>
<span id="r3_sf" class="t" style="top:1120.00px;font-size:26.75px;color:#171a22;font-weight:400;-webkit-text-stroke:0.25px #171a22;right:391.16px;">0</span>
<span id="r3_na" class="t" style="top:1120.00px;font-size:26.75px;color:#6b6e79;font-weight:400;letter-spacing:0.494px;-webkit-text-stroke:0.25px #6b6e79;left:1776.82px;">n/a</span>
<span id="r3_day" class="t" style="top:1120.00px;font-size:26.75px;color:#171a22;font-weight:400;letter-spacing:-0.041px;-webkit-text-stroke:0.25px #171a22;right:154.19px;">1 day</span>
<svg class="b" style="left:1990px;top:1113px" width="40" height="40" viewBox="1990 1113 40 40"><path d="M2016.6 1126.70 A10.7 10.7 0 1 0 2016.25 1140.90" fill="none" stroke="#2b6cca" stroke-width="3.8" stroke-linecap="round"/><path d="M2019.4 1123.00 V1130.10 H2012.3" fill="none" stroke="#2b6cca" stroke-width="3.8" stroke-linecap="round" stroke-linejoin="round"/></svg>
<svg class="b" style="left:2050px;top:1115px" width="32" height="36" viewBox="2050 1115 32 36"><path d="M2057 1124.50 H2075.5 M2063.2 1123.20 H2069.4" fill="none" stroke="#a3a5ad" stroke-width="3" stroke-linecap="round"/><path d="M2059 1124.50 V1143.20 A1.5 1.5 0 0 0 2060.5 1144.70 H2072 A1.5 1.5 0 0 0 2073.5 1143.20 V1124.50" fill="none" stroke="#a3a5ad" stroke-width="3"/></svg>
</body></html>
